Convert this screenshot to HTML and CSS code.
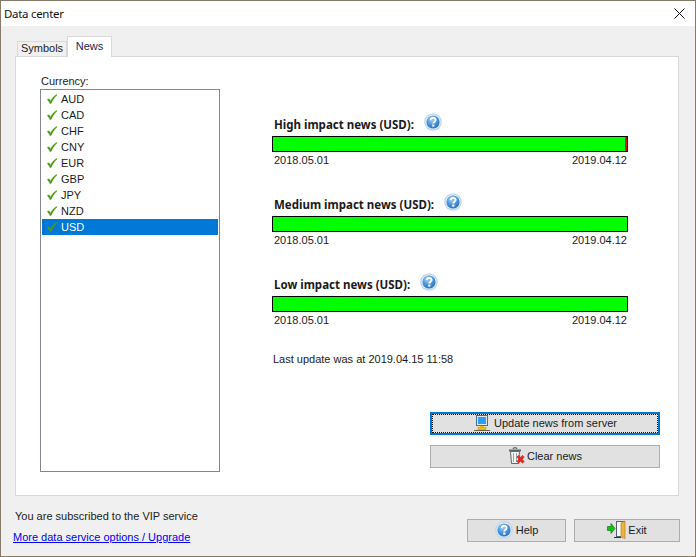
FILE: index.html
```html
<!DOCTYPE html>
<html lang="en">
<head>
<meta charset="utf-8">
<title>Data center</title>
<link rel="stylesheet" href="styles.css">
</head>
<body>
<svg class="defs" width="0" height="0" aria-hidden="true">
  <defs>
    <radialGradient id="helpfill" cx="40%" cy="30%" r="75%">
      <stop offset="0" stop-color="#a5d0f5"/>
      <stop offset="0.55" stop-color="#4a94dc"/>
      <stop offset="1" stop-color="#2b6fbd"/>
    </radialGradient>
    <symbol id="check" viewBox="0 0 12 12">
      <path d="M1 6.5 L3 5.5 L4.6 7.8 C6 5 8 2.8 10.8 1.2 L11.3 2 C8.8 4.2 6.8 7 5.2 10.8 L4 10.8 C3.2 9 2.2 7.6 1 6.5 Z" fill="#4f9a12"/>
    </symbol>
    <symbol id="help" viewBox="0 0 18 18">
      <circle cx="9" cy="9" r="8.8" fill="#bcd6ee"/>
      <circle cx="9" cy="9" r="7.6" fill="#e6f1fa"/>
      <circle cx="9" cy="9" r="6.6" fill="url(#helpfill)"/>
      <path d="M6.6 7.1 C6.7 5.6 7.7 4.9 9.1 4.9 C10.6 4.9 11.6 5.7 11.6 7 C11.6 8.7 9.3 8.8 9.3 10.6" fill="none" stroke="#fff" stroke-width="1.9"/>
      <rect x="8.2" y="11.5" width="2.2" height="2.1" fill="#fff"/>
    </symbol>
  </defs>
</svg>
<div class="window">
  <header class="titlebar">
    <span class="title">Data center</span>
    <svg class="close" width="11" height="11" viewBox="0 0 11 11"><path d="M0.5 0.5 L10.5 10.5 M10.5 0.5 L0.5 10.5" stroke="#111" stroke-width="1" fill="none"/></svg>
  </header>
  <main class="content">
    <div class="tabs">
      <span class="tab">Symbols</span>
      <span class="tab tab-active">News</span>
    </div>
    <section class="pane">
      <div class="currency">
        <div class="field-label">Currency:</div>
        <ul class="list">
          <li class="item"><svg class="check"><use href="#check"/></svg>AUD</li>
          <li class="item"><svg class="check"><use href="#check"/></svg>CAD</li>
          <li class="item"><svg class="check"><use href="#check"/></svg>CHF</li>
          <li class="item"><svg class="check"><use href="#check"/></svg>CNY</li>
          <li class="item"><svg class="check"><use href="#check"/></svg>EUR</li>
          <li class="item"><svg class="check"><use href="#check"/></svg>GBP</li>
          <li class="item"><svg class="check"><use href="#check"/></svg>JPY</li>
          <li class="item"><svg class="check"><use href="#check"/></svg>NZD</li>
          <li class="item item-selected"><svg class="check"><use href="#check"/></svg>USD</li>
        </ul>
      </div>
      <div class="news">
        <div class="impact impact-high">
          <div class="impact-title"><b>High impact news (USD):</b><svg class="help-small"><use href="#help"/></svg></div>
          <div class="bar"><span class="bar-end"></span></div>
          <div class="dates"><span>2018.05.01</span><span>2019.04.12</span></div>
        </div>
        <div class="impact impact-medium">
          <div class="impact-title"><b>Medium impact news (USD):</b><svg class="help-small"><use href="#help"/></svg></div>
          <div class="bar"></div>
          <div class="dates"><span>2018.05.01</span><span>2019.04.12</span></div>
        </div>
        <div class="impact impact-low">
          <div class="impact-title"><b>Low impact news (USD):</b><svg class="help-small"><use href="#help"/></svg></div>
          <div class="bar"></div>
          <div class="dates"><span>2018.05.01</span><span>2019.04.12</span></div>
        </div>
        <p class="last-update">Last update was at 2019.04.15 11:58</p>
        <div class="actions">
          <button class="btn btn-wide btn-focus" type="button"><span class="focus-ring">
            <svg width="18" height="18" viewBox="0 0 18 18"><rect x="3.5" y="1.5" width="11" height="10" fill="#dfe9f2" stroke="#4a6a8a"/><rect x="5" y="3" width="8" height="7" fill="#2f9cf0"/><rect x="7" y="12" width="4" height="1.5" fill="#f0c020"/><rect x="5" y="13.5" width="8" height="2" fill="#f5c518" stroke="#a88a10" stroke-width="0.5"/><path d="M1 16.5 H17" stroke="#66604a" stroke-width="1"/></svg>
            Update news from server</span></button>
          <button class="btn btn-wide btn-clear" type="button">
            <svg width="18" height="19" viewBox="0 0 18 19"><path d="M2.5 5.5 L3.5 17.5 H10.5 L11.5 5.5 Z" fill="#f2f4f5" stroke="#60666a"/><path d="M1 4.5 H13" stroke="#60666a" stroke-width="2"/><path d="M5 3 C5.5 1.2 8.5 1.2 9 3" fill="none" stroke="#60666a" stroke-width="1.2"/><path d="M5.5 7 V16 M8.5 7 V16" stroke="#9aa0a5"/><path d="M9.5 10 L15.5 16.5 M15.5 10 L9.5 16.5" stroke="#e02a24" stroke-width="3"/></svg>
            Clear news</button>
        </div>
      </div>
    </section>
    <footer class="footer">
      <div class="footer-text">
        <div class="status">You are subscribed to the VIP service</div>
        <a class="upgrade" href="#">More data service options / Upgrade</a>
      </div>
      <div class="footer-buttons">
        <button class="btn btn-help" type="button"><svg class="help-btn"><use href="#help"/></svg>Help</button>
        <button class="btn btn-exit" type="button">
          <svg width="19" height="20" viewBox="0 0 19 20"><path d="M0.5 6.5 H4 V3.5 L8 8.5 L4 13.5 V10.5 H0.5 Z" fill="#16c016" stroke="#0b7a0b" stroke-width="0.7"/><rect x="9.5" y="1.5" width="8" height="15" fill="#f4f6f8" stroke="#56606a"/><path d="M14 3 L18 1 V18.5 L14 17 Z" fill="#eeb23e" stroke="#a57a20" stroke-width="0.6"/><path d="M7 17.5 H14" stroke="#333" stroke-width="1"/></svg>
          Exit</button>
      </div>
    </footer>
  </main>
</div>
</body>
</html>
```
FILE: styles.css
```css
* { box-sizing: border-box; }
html, body { margin: 0; padding: 0; }
body {
  width: 696px;
  height: 557px;
  overflow: hidden;
  font-family: "Liberation Sans", sans-serif;
  font-size: 11px;
  color: #1a1a1a;
}
.defs { position: absolute; }
.window {
  width: 696px;
  height: 557px;
  display: flex;
  flex-direction: column;
  border: 1px solid #85796a;
  background: #f0f0f0;
}
.titlebar {
  height: 25px;
  flex: none;
  background: #fff;
  display: flex;
  align-items: center;
  justify-content: space-between;
  padding: 0 10px 0 3px;
}
.title { font-family: "Noto Sans", sans-serif; font-size: 11.5px; letter-spacing: -0.3px; color: #111; }
.close { display: block; }
.content {
  flex: 1;
  display: flex;
  flex-direction: column;
  padding: 10px 16px 0 14px;
  min-height: 0;
}
.tabs {
  height: 20px;
  flex: none;
  display: flex;
  align-items: flex-end;
  padding-left: 2px;
  position: relative;
  z-index: 1;
}
.tab {
  height: 15px;
  width: 50px;
  border: 1px solid #d9d9d9;
  border-bottom: 0;
  text-align: center;
  line-height: 12px;
}
.tab-active {
  height: 21px;
  width: 45px;
  margin-bottom: -1px;
  background: #fff;
  line-height: 19px;
  color: #1c1c50;
}
.pane {
  height: 440px;
  flex: none;
  background: #fff;
  border: 1px solid #d9d9d9;
  display: flex;
  padding: 17px 0 0 24px;
}
.currency { width: 180px; flex: none; }
.field-label { height: 15px; line-height: 15px; margin-left: 1px; }
.list {
  list-style: none;
  margin: 0;
  padding: 1px;
  width: 180px;
  height: 383px;
  border: 1px solid #828790;
}
.item {
  height: 16px;
  display: flex;
  align-items: center;
  padding-left: 4px;
  line-height: 16px;
}
.item-selected { background: #0078d7; color: #fff; }
.check { width: 12px; height: 12px; margin: -1px 3px 0 0; flex: none; }
.news {
  width: 388px;
  margin-left: 52px;
  flex: none;
  display: flex;
  flex-direction: column;
}
.impact { width: 356px; }
.impact-high { margin-top: 44px; }
.impact-medium { margin-top: 28px; }
.impact-low { margin-top: 28px; }
.impact-title {
  display: flex;
  align-items: center;
  height: 18px;
  padding: 0 0 6px 2px;
}
.impact-title b { font-family: "Noto Sans", sans-serif; font-weight: bold; font-size: 11.5px; }
.help-small { width: 18px; height: 18px; margin: -4px 0 0 10px; flex: none; }
.bar {
  height: 16px;
  background: #00ff00;
  border: 1px solid #000;
  display: flex;
  justify-content: flex-end;
}
.bar-end { width: 2px; background: #e01010; }
.dates {
  display: flex;
  justify-content: space-between;
  padding: 0 1px 0 2px;
  height: 17px;
  line-height: 14px;
  margin-top: 1px;
}
.last-update { margin: 22px 0 0 1px; line-height: 14px; }
.actions {
  margin: 46px 0 0 158px;
  width: 230px;
  display: flex;
  flex-direction: column;
  gap: 10px;
}
.btn {
  font: inherit;
  color: #1a1a1a;
  background: #e1e1e1;
  border: 1px solid #adadad;
  border-radius: 0;
  padding: 0 0 2px;
  height: 23px;
  display: flex;
  align-items: center;
  justify-content: center;
  gap: 3px;
}
.btn-wide { width: 230px; }
.btn-clear { gap: 1px; }
.btn-focus { border: 2px solid #0078d7; padding: 0; }
.focus-ring {
  width: 100%;
  height: 100%;
  display: flex;
  align-items: center;
  justify-content: center;
  gap: 3px;
  padding-bottom: 2px;
  outline: 1px dotted #111;
  outline-offset: -1px;
}
.footer {
  flex: 1;
  display: flex;
  justify-content: space-between;
  min-height: 0;
}
.footer-text { padding-top: 13px; }
.status { height: 16px; line-height: 14px; }
.upgrade { display: block; margin-top: 5px; line-height: 14px; color: #0000ee; margin-left: -2px; }
.footer-buttons { display: flex; gap: 8px; padding-top: 23px; margin-right: -1px; }
.btn-help { width: 99px; }
.btn-exit { width: 106px; gap: 2px; }
.help-btn { width: 18px; height: 18px; flex: none; }
```
